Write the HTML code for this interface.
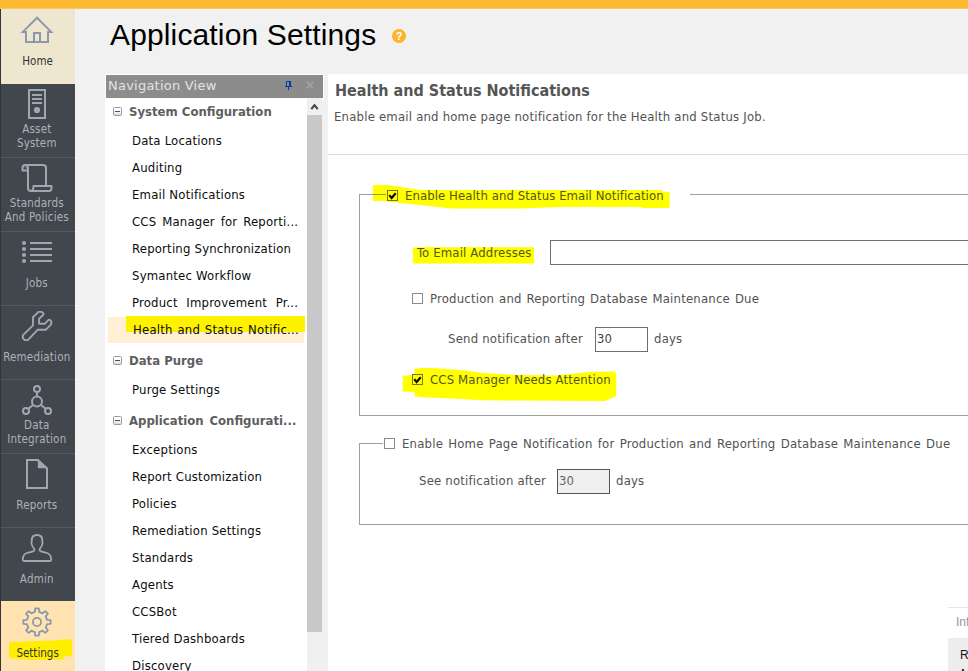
<!DOCTYPE html>
<html><head><meta charset="utf-8">
<style>
*{box-sizing:border-box;margin:0;padding:0}
html,body{width:968px;height:671px;overflow:hidden;background:#f1f1f1;font-family:"Liberation Sans","DejaVu Sans",sans-serif;}
.abs{position:absolute}
#top{left:0;top:0;width:968px;height:8px;background:#fdb92e;border-bottom:1px solid #f7c765;height:9px;z-index:5}
#side{left:0;top:0;width:75px;height:671px;background:#42464d;border-left:1px solid #32363c}
.it{position:absolute;left:0;width:74px;height:74px;border-bottom:1px solid #555961;color:#adb2b9;font-size:11.5px;text-align:center;line-height:14px;font-family:"DejaVu Sans Condensed","Liberation Sans",sans-serif;}
.it svg{position:absolute;left:-1px;top:0}
.it .lb{position:absolute;left:-1.2px;width:74px;white-space:nowrap;letter-spacing:.2px}
h1{position:absolute;left:110px;top:16px;font-size:30px;letter-spacing:.14px;font-weight:normal;color:#000;line-height:38px;white-space:nowrap}
#navh{left:106px;top:75px;width:217px;height:23px;background:#8c8c8c;color:#e2e2e2;font-size:13px;letter-spacing:.23px;line-height:22px;padding-left:2px;font-family:"DejaVu Sans","Liberation Sans",sans-serif}
#nav{left:105px;top:98px;width:202px;height:573px;background:#fff;overflow:hidden}
#sb{left:307px;top:98px;width:15px;height:573px;background:#f0f0f0}
#thumb{left:307px;top:115px;width:15px;height:517px;background:#c8c8c8}
.t{position:absolute;left:27px;font-size:13px;letter-spacing:.2px;color:#0c0c0c;white-space:nowrap;line-height:16px;font-family:"DejaVu Sans Condensed","Liberation Sans",sans-serif}
.g{position:absolute;left:24px;font-size:13px;font-weight:bold;color:#5e5e5e;white-space:nowrap;line-height:16px;font-family:"DejaVu Sans Condensed","Liberation Sans",sans-serif}
.bx{position:absolute;left:8px;width:9px;height:9px;border:1px solid #9a9a9a;border-radius:1.5px;background:linear-gradient(#fff 45%,#d8d8d8)}
.bx:after{content:"";position:absolute;left:1px;top:3px;width:5px;height:1px;background:#3a4a9a}
#main{left:328px;top:74px;width:640px;height:597px;background:#fff}
.c{position:absolute;font-size:13px;letter-spacing:.2px;color:#525252;white-space:nowrap;line-height:16px;font-family:"DejaVu Sans Condensed","Liberation Sans",sans-serif}
.hl{position:absolute;background:#fff200}
.cb{position:absolute;width:11px;height:11px;border:1px solid #333;background:#fff}
.ln{position:absolute;background:#9e9e9e}
.in{position:absolute;border:1px solid #6e6e6e;background:#fff;font-size:13px;color:#444;line-height:16px;font-family:"DejaVu Sans Condensed","Liberation Sans",sans-serif}
</style></head><body>
<div id="top" class="abs"></div>
<div id="side" class="abs">
<div class="it" style="top:8px;height:76px;background:#eee6cf;border-bottom:none;color:#333;"><svg width="75" height="76" viewBox="0 8 75 76"><path d="M37 17.7 L22.8 31.9 H26 V42 H48 V31.9 H51.2 Z" fill="none" stroke="#8c99ad" stroke-width="2"/><path d="M34 42 V33 H40 V42" fill="none" stroke="#8c99ad" stroke-width="2"/></svg><div class="lb" style="top:46px;letter-spacing:0;left:-.4px">Home</div></div>
<div class="it" style="top:84px;height:74px;"><svg width="75" height="74" viewBox="0 84 75 74"><rect x="29" y="90" width="16" height="28" fill="none" stroke="#a0a7b1" stroke-width="2"/><path d="M32 95h10M32 99h10M32 103h10" stroke="#a0a7b1" stroke-width="2"/><circle cx="37" cy="110" r="3.1" fill="#a0a7b1"/></svg><div class="lb" style="top:38px">Asset</div><div class="lb" style="top:52px">System</div></div>
<div class="it" style="top:158px;height:74px;"><svg width="75" height="74" viewBox="0 158 75 74"><path d="M28 170.5 H22.5 V168 Q22.5 165 25.5 165 H43 Q46 165 46 168 V186 M25.5 165 Q28 165 28 168 V188 Q28 191 31 191 H49 Q51.5 191 51.5 188 V186 H33.5 Q33.5 191 30.5 191" fill="none" stroke="#a0a7b1" stroke-width="2" stroke-linejoin="round"/><path d="M24 166.5 L27.5 170 V167 Z" fill="#a0a7b1" opacity=".5"/></svg><div class="lb" style="top:38px">Standards</div><div class="lb" style="top:52px">And Policies</div></div>
<div class="it" style="top:232px;height:74px;"><svg width="75" height="74" viewBox="0 232 75 74"><path d="M30 243h22" stroke="#a0a7b1" stroke-width="2"/><circle cx="24" cy="243" r="2.1" fill="#a0a7b1"/><path d="M30 249h22" stroke="#a0a7b1" stroke-width="2"/><circle cx="24" cy="249" r="2.1" fill="#a0a7b1"/><path d="M30 255h22" stroke="#a0a7b1" stroke-width="2"/><circle cx="24" cy="255" r="2.1" fill="#a0a7b1"/><path d="M30 261h22" stroke="#a0a7b1" stroke-width="2"/><circle cx="24" cy="261" r="2.1" fill="#a0a7b1"/></svg><div class="lb" style="top:44px">Jobs</div></div>
<div class="it" style="top:306px;height:74px;"><svg width="75" height="74" viewBox="0 306 75 74"><path d="M38.5 311.9 L41.9 311.9 L43.4 313.5 L43.4 314.8 L39.1 318.8 L39.1 323.8 L44.7 323.8 L48.5 319.9 L50.0 319.9 L51.3 321.3 L51.3 324.1 L45.7 329.8 L37.5 329.8 L27.8 340.1 L24.7 340.1 L22.8 338.2 L22.8 335.4 L33.0 325.4 L33.0 317.3 Z" fill="none" stroke="#a0a7b1" stroke-width="1.9" stroke-linejoin="round"/></svg><div class="lb" style="top:44px">Remediation</div></div>
<div class="it" style="top:380px;height:74px;"><svg width="75" height="74" viewBox="0 380 75 74"><g fill="none" stroke="#a0a7b1" stroke-width="2"><circle cx="37" cy="389" r="3"/><circle cx="37" cy="401.6" r="5"/><circle cx="26" cy="411" r="3"/><circle cx="48" cy="411" r="3"/><path d="M37 392V396.6M33 405L28.3 408.8M41 405L45.7 408.8"/></g></svg><div class="lb" style="top:38px">Data</div><div class="lb" style="top:52px">Integration</div></div>
<div class="it" style="top:454px;height:74px;"><svg width="75" height="74" viewBox="0 454 75 74"><path d="M27 460 H37.8 L47 468.2 V488 H27 Z" fill="none" stroke="#a0a7b1" stroke-width="2"/><path d="M37.8 459.5 L47.5 468.3 H37.8 Z" fill="#a0a7b1"/></svg><div class="lb" style="top:44px">Reports</div></div>
<div class="it" style="top:528px;height:73px;border-bottom:none;"><svg width="75" height="73" viewBox="0 528 75 73"><path d="M37 535 C33.5 535 31.7 537.5 31.7 540.5 C31.7 542 31.4 543 31.5 543.5 C31.8 546 33 547.5 34.3 549 V550.5 C34.3 551.5 30 552 27 553 C24 554 22.8 557 22.8 559.5 Q22.8 561 24.5 561 H49.5 Q51.2 561 51.2 559.5 C51.2 557 50 554 47 553 C44 552 39.7 551.5 39.7 550.5 V549 C41 547.5 42.2 546 42.5 543.5 C42.6 543 42.3 542 42.3 540.5 C42.3 537.5 40.5 535 37 535 Z" fill="none" stroke="#a0a7b1" stroke-width="1.8" stroke-linejoin="round"/></svg><div class="lb" style="top:44px">Admin</div></div>
<div class="abs" style="left:0;top:601px;width:74px;height:70px;background:#ffe3b0"></div>
<div class="it" style="top:601px;height:70px;border-bottom:none;"><svg width="75" height="70" viewBox="0 601 75 70"><path d="M35.2 608.4 L38.8 608.4 L39.2 611.9 L42.6 613.3 L45.3 611.1 L47.9 613.7 L45.7 616.4 L47.1 619.8 L50.6 620.2 L50.6 623.8 L47.1 624.2 L45.7 627.6 L47.9 630.3 L45.3 632.9 L42.6 630.7 L39.2 632.1 L38.8 635.6 L35.2 635.6 L34.8 632.1 L31.4 630.7 L28.7 632.9 L26.1 630.3 L28.3 627.6 L26.9 624.2 L23.4 623.8 L23.4 620.2 L26.9 619.8 L28.3 616.4 L26.1 613.7 L28.7 611.1 L31.4 613.3 L34.8 611.9 Z" fill="none" stroke="#8c99ad" stroke-width="1.8" stroke-linejoin="round"/><circle cx="37" cy="622" r="4.1" fill="none" stroke="#8c99ad" stroke-width="1.8"/></svg></div>
<svg class="abs" style="left:-1px;top:0" width="76" height="671" viewBox="0 0 76 671"><path d="M9 642.5 L20 641.5 L55 640.5 L62 639.5 L72 639.5 L72 656 L64 656.5 L63.5 659.5 L30 660 L12 658.5 L9 657 Z" fill="#ffee00"/></svg>
<div class="it" style="top:601px;height:70px;border:none;color:#333"><div class="lb" style="top:45px;letter-spacing:0;left:-.4px">Settings</div></div>
</div>
<h1>Application Settings</h1>
<svg class="abs" style="left:391px;top:28px" width="16" height="16" viewBox="0 0 16 16"><circle cx="8" cy="8" r="7" fill="#fbb42c"/><text x="8" y="12.4" font-family="Liberation Sans, sans-serif" font-size="11" font-weight="bold" fill="#fff" text-anchor="middle">?</text></svg>
<div class="abs" style="left:105px;top:74px;width:219px;height:26px;background:#fff"></div>
<div id="navh" class="abs">Navigation View</div>
<svg class="abs" style="left:280px;top:76px" width="20" height="20" viewBox="280 76 20 20"><path d="M286.5 86V81.5H290.5V86" fill="none" stroke="#0b3a9e" stroke-width="1"/><rect x="289" y="81" width="2" height="5.5" fill="#0b3a9e"/><rect x="285" y="86" width="7" height="1" fill="#0b3a9e"/><rect x="288" y="87" width="1" height="3.2" fill="#0b3a9e"/></svg>
<svg class="abs" style="left:305px;top:80px" width="10" height="10" viewBox="0 0 10 10"><path d="M1.7 1.7l6.6 6.6M8.3 1.7l-6.6 6.6" stroke="#a0a0a0" stroke-width="1.9"/></svg>
<div id="nav" class="abs">
<div class="bx" style="top:9px"></div><div class="g" style="top:6px;">System Configuration</div>
<div class="t" style="top:35px;">Data Locations</div>
<div class="t" style="top:62px;">Auditing</div>
<div class="t" style="top:89px;">Email Notifications</div>
<div class="t" style="top:116px;word-spacing:1.9px;">CCS Manager for Reporti...</div>
<div class="t" style="top:143px;">Reporting Synchronization</div>
<div class="t" style="top:170px;">Symantec Workflow</div>
<div class="t" style="top:197px;word-spacing:4.6px;">Product Improvement Pr...</div>
<div class="abs" style="left:3px;top:219px;width:196px;height:26px;background:#ffefd5"></div><div class="hl" style="left:21px;top:218px;width:179px;height:16px"></div><div class="t" style="left:28px;top:224px;word-spacing:0.9px;">Health and Status Notific...</div>
<div class="bx" style="top:258px"></div><div class="g" style="top:255px;">Data Purge</div>
<div class="t" style="top:284px;">Purge Settings</div>
<div class="bx" style="top:318px"></div><div class="g" style="top:315px;word-spacing:1.8px;">Application Configurati...</div>
<div class="t" style="top:344px;">Exceptions</div>
<div class="t" style="top:371px;">Report Customization</div>
<div class="t" style="top:398px;">Policies</div>
<div class="t" style="top:425px;">Remediation Settings</div>
<div class="t" style="top:452px;">Standards</div>
<div class="t" style="top:479px;">Agents</div>
<div class="t" style="top:506px;">CCSBot</div>
<div class="t" style="top:533px;">Tiered Dashboards</div>
<div class="t" style="top:560px;">Discovery</div>
</div>
<div id="sb" class="abs"></div><div id="thumb" class="abs"></div>
<svg class="abs" style="left:307px;top:100px" width="15" height="14" viewBox="307 100 15 14"><path d="M311.3 109.2L314.5 105.2L317.7 109.2" fill="none" stroke="#444" stroke-width="2.1"/></svg>
<div id="main" class="abs"></div>
<div class="abs" style="left:328px;top:154px;width:640px;height:1px;background:#dcdcdc"></div>
<div class="abs" style="left:335px;top:81px;font:bold 16px/20px 'DejaVu Sans Condensed','Liberation Sans',sans-serif;color:#555;white-space:nowrap">Health and Status Notifications</div>
<div class="c" style="left:334px;top:109px">Enable email and home page notification for the Health and Status Job.</div>

<!-- group 1 -->
<div class="ln" style="left:359px;top:194px;width:1px;height:222px"></div>
<div class="ln" style="left:690px;top:194px;width:278px;height:1px"></div>
<div class="ln" style="left:359px;top:415px;width:609px;height:1px"></div>
<svg class="abs" style="left:0;top:0" width="968" height="671" viewBox="0 0 968 671"><g fill="#ffff00"><path d="M373 185L387.5 185L420.5 189.9L662 189.9L662.5 192L669.6 192L669.6 208.1L642 208.1L642 206.9L561 206.9L520 208.6L452 208.6L382.5 201.1L373 201.1Z"/><path d="M413 247.6L420 247.2L534 247.2L534 263.6L413 263.6Z"/><path d="M402.8 376.1L414.6 374.6L414.6 368.7L420.8 368.1L430.7 368.1L449.3 369.3L465.4 370.5L482.8 373L516 374.9L555.6 375.5L575 373.5L592.8 371.8L613.8 371.5L616.3 373.6L616.3 396L613.8 397.2L605 400.9L516 400.6L482.8 400.3L451.8 398.4L422 397.2L414.6 396.6L414.6 392L402.8 391.6Z"/></g></svg>
<div class="ln" style="left:359px;top:194px;width:14px;height:1px"></div><div class="ln" style="left:373px;top:194px;width:13px;height:1px;background:#9c9c1e"></div>
<div class="cb" style="left:387px;top:190px;background:none;border-color:#77771a"></div>
<svg class="abs" style="left:388px;top:191px" width="9" height="9" viewBox="0 0 9 9"><path d="M1.3 4.2L3.6 7L7.7 2.2" fill="none" stroke="#000" stroke-width="2.1"/></svg>
<div class="c" style="left:405px;top:188px;letter-spacing:.07px;color:#55551a">Enable Health and Status Email Notification</div>
<div class="c" style="left:417px;top:245px;letter-spacing:.15px;color:#55551a">To Email Addresses</div>
<div class="in" style="left:550px;top:240px;width:430px;height:25px"></div>
<div class="cb" style="left:412px;top:293px;border-color:#8a8a8a"></div>
<div class="c" style="left:430px;top:291px;word-spacing:1px">Production and Reporting Database Maintenance Due</div>
<div class="c" style="left:448px;top:331px">Send notification after</div>
<div class="in" style="left:595px;top:327px;width:53px;height:25px;padding:3px 0 0 1px">30</div>
<div class="c" style="left:654px;top:331px">days</div>
<div class="cb" style="left:412px;top:374px;background:none;border-color:#77771a"></div>
<svg class="abs" style="left:413px;top:375px" width="9" height="9" viewBox="0 0 9 9"><path d="M1.3 4.2L3.6 7L7.7 2.2" fill="none" stroke="#000" stroke-width="2.1"/></svg>
<div class="c" style="left:430px;top:372px;letter-spacing:.15px;color:#55551a">CCS Manager Needs Attention</div>

<!-- group 2 -->
<div class="ln" style="left:359px;top:443px;width:1px;height:82px"></div>
<div class="ln" style="left:359px;top:443px;width:24px;height:1px"></div>
<div class="ln" style="left:359px;top:524px;width:609px;height:1px"></div>
<div class="cb" style="left:384px;top:438px;border-color:#8a8a8a"></div>
<div class="c" style="left:402px;top:436px;word-spacing:1.3px">Enable Home Page Notification for Production and Reporting Database Maintenance Due</div>
<div class="c" style="left:419px;top:473px">See notification after</div>
<div class="in" style="left:557px;top:469px;width:53px;height:25px;padding:3px 0 0 1px;background:#f0f0f0;color:#666;border-color:#555">30</div>
<div class="c" style="left:616px;top:473px">days</div>

<!-- popup bottom right -->
<div class="abs" style="left:948px;top:607px;width:20px;height:64px;background:#fff;border-top:1px solid #e6e6e6"></div>
<div class="abs" style="left:948px;top:638px;width:20px;height:33px;background:#ededed"></div>
<div class="abs" style="left:956px;top:615px;font:12px/14px 'Liberation Sans',sans-serif;color:#9a90a8;white-space:nowrap">Inf</div>
<div class="abs" style="left:960px;top:648px;font:12px/14px 'Liberation Sans',sans-serif;color:#111;white-space:nowrap">R</div>
<div class="abs" style="left:961px;top:667px;font:12px/14px 'Liberation Sans',sans-serif;color:#111;white-space:nowrap">M</div>
</body></html>
